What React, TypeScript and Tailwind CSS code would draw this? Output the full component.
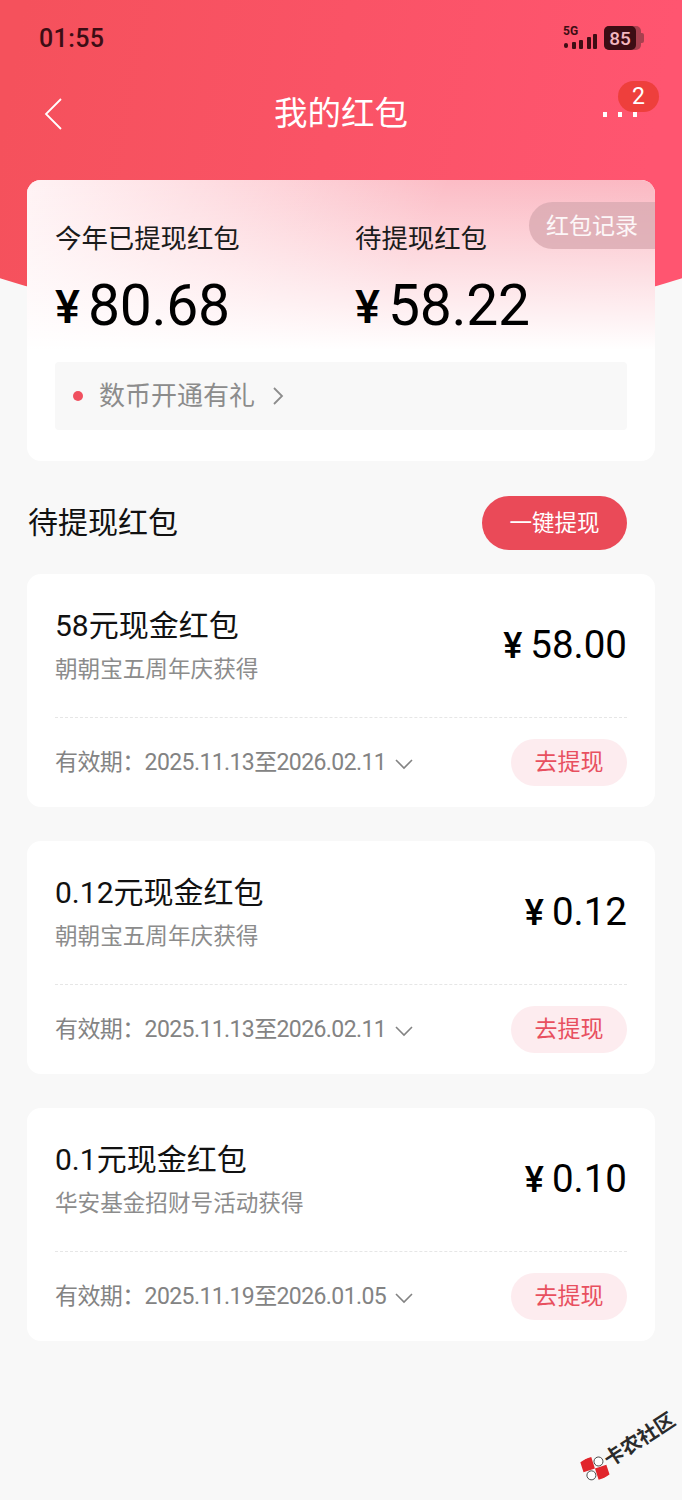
const CJK = 'font-["Roboto","Noto_Sans_CJK_SC",sans-serif]';

type Packet = {
  title: string;
  source: string;
  amount: string;
  validity: string;
};

const packets: Packet[] = [
  { title: '58元现金红包', source: '朝朝宝五周年庆获得', amount: '58.00', validity: '2025.11.13至2026.02.11' },
  { title: '0.12元现金红包', source: '朝朝宝五周年庆获得', amount: '0.12', validity: '2025.11.13至2026.02.11' },
  { title: '0.1元现金红包', source: '华安基金招财号活动获得', amount: '0.10', validity: '2025.11.19至2026.01.05' },
];

function StatusBar() {
  return (
    <div className="flex h-[76px] items-center justify-between pl-[39px] pr-[41px]">
      <span className="text-[25px] font-medium leading-none tracking-[0.4px] text-[#3d0d14]">01:55</span>
      <div className="flex items-center gap-[6px]">
        <svg width="36" height="26" viewBox="0 0 36 26" fill="#3d0d14">
          <text x="1" y="10" fontSize="12" fontWeight="700" fontFamily="Roboto">5G</text>
          <rect x="2" y="18" width="4" height="5" rx="2" />
          <rect x="10" y="17" width="4" height="7" rx="1" />
          <rect x="17" y="15" width="4" height="9" rx="1" />
          <rect x="25" y="12" width="4" height="12" rx="1" />
          <rect x="31" y="9" width="4" height="15" rx="1" />
        </svg>
        <div className="relative flex h-[24px] w-[37px] items-center rounded-[5px] bg-[#a8404f]">
          <div className="flex h-full w-[32px] items-center justify-center rounded-[5px] bg-[#3d0d14] text-[19px] font-medium leading-none text-[#f3b7bf]">
            85
          </div>
          <div className="absolute -right-[3px] h-[10px] w-[3px] rounded-r-[2px] bg-[#a8404f]" />
        </div>
      </div>
    </div>
  );
}

function NavBar() {
  return (
    <div className="relative flex h-[76px] items-center justify-center">
      <svg className="absolute left-[42px] top-[21px]" width="22" height="34" viewBox="0 0 22 34" fill="none" stroke="#fff" strokeWidth="1.8">
        <path d="M19 2 L4 17 L19 32" />
      </svg>
      <span className="text-[33.5px] leading-none text-white">我的红包</span>
      <div className="absolute left-[603px] top-[36px] flex gap-[11px]">
        <span className="h-[5px] w-[4px] bg-white" />
        <span className="h-[5px] w-[4px] bg-white" />
        <span className="h-[5px] w-[4px] bg-white" />
      </div>
      <div className="absolute left-[618px] top-[5px] flex h-[31px] w-[41px] items-center justify-center rounded-full bg-[#ee3f3c] text-[23px] leading-none text-white">
        2
      </div>
    </div>
  );
}

function Balance({ label, value }: { label: string; value: string }) {
  return (
    <div className="flex flex-col">
      <span className="text-[26.4px] leading-[36px] text-[#1b1b1b]">{label}</span>
      <div className="mt-[17px] flex items-center text-black">
        <span className="mr-[8px] text-[47px] font-medium leading-none">¥</span>
        <span className="text-[57px] leading-[64px] tracking-[-0.3px]">{value}</span>
      </div>
    </div>
  );
}

function SummaryCard() {
  return (
    <div className="relative mx-[27px] mt-[28px] h-[281px] overflow-hidden rounded-[14px] bg-white">
      <div className="h-[170px] bg-[linear-gradient(to_bottom,rgba(255,255,255,0)_0%,#ffffff_100%),linear-gradient(115deg,rgba(255,255,255,0.8)_0%,rgba(255,255,255,0)_60%),linear-gradient(90deg,#fec4cc_0%,#fbb8c2_100%)] px-[28px] pt-[41px]">
        <div className="grid grid-cols-[300px_1fr]">
          <Balance label="今年已提现红包" value="80.68" />
          <Balance label="待提现红包" value="58.22" />
        </div>
      </div>
      <div className="absolute right-0 top-[22px] flex h-[47px] w-[126px] items-center justify-center rounded-l-full bg-[#d9aab2]/80 pt-[1px] text-[23px] leading-none text-white/90">
        红包记录
      </div>
      <div className="mx-[28px] mt-[12px] flex h-[68px] items-center rounded-[4px] bg-[#f8f8f8] pl-[18px]">
        <span className="h-[10px] w-[10px] rounded-full bg-[#f0505f]" />
        <span className="ml-[16px] text-[26px] leading-none text-[#8c8c8c]">数币开通有礼</span>
        <svg className="ml-[17px]" width="12" height="20" viewBox="0 0 12 20" fill="none" stroke="#8c8c8c" strokeWidth="1.8">
          <path d="M2 2 L10 10 L2 18" />
        </svg>
      </div>
    </div>
  );
}

function PacketCard({ packet }: { packet: Packet }) {
  return (
    <div className="h-[233px] rounded-[14px] bg-white px-[28px]">
      <div className="flex h-[144px] items-center justify-between border-b border-dashed border-[#e6e6e6]">
        <div className="flex flex-col">
          <span className="text-[30px] leading-[40px] text-[#111]">{packet.title}</span>
          <span className="mt-[8px] text-[22.6px] leading-[32px] text-[#8c8c8c]">{packet.source}</span>
        </div>
        <div className="flex items-center text-black">
          <span className="mr-[8px] text-[36px] font-medium leading-none">¥</span>
          <span className="text-[38.5px] leading-none">{packet.amount}</span>
        </div>
      </div>
      <div className="flex h-[89px] items-center justify-between">
        <div className="flex items-center">
          <span className="text-[23px] leading-none tracking-[-0.6px] text-[#838383]">有效期：{packet.validity}</span>
          <svg className="ml-[9px] mt-[4px]" width="18" height="11" viewBox="0 0 18 11" fill="none" stroke="#838383" strokeWidth="1.6">
            <path d="M1 1 L9 9 L17 1" />
          </svg>
        </div>
        <div className="flex h-[47px] w-[116px] items-center justify-center rounded-full bg-[#fdecef] text-[23px] leading-none text-[#e8505f]">
          去提现
        </div>
      </div>
    </div>
  );
}

function Watermark() {
  return (
    <div className="absolute left-[575px] top-[1430px] flex h-[30px] w-[112px] -rotate-[33deg] items-center">
      <svg className="shrink-0" width="26" height="26" viewBox="0 0 26 26">
        <g transform="rotate(15 13 13)">
          <rect x="1" y="1" width="12" height="12" fill="#e1252b" />
          <rect x="13" y="13" width="12" height="12" fill="#e1252b" />
          <rect x="14" y="3" width="9" height="9" rx="4.5" fill="#fff" stroke="#333" strokeWidth="0.8" />
          <rect x="3" y="14" width="9" height="9" rx="4.5" fill="#fff" stroke="#333" strokeWidth="0.8" />
        </g>
      </svg>
      <span className="whitespace-nowrap text-[20px] font-bold leading-none text-[#2b2b2b]">卡农社区</span>
    </div>
  );
}

export default function App() {
  return (
    <div className={`relative h-[1500px] w-[682px] overflow-hidden bg-[#f8f8f8] ${CJK}`}>
      <div className="absolute -left-[159px] -top-[200px] h-[524px] w-[1000px] rounded-b-[500px_170px] bg-[linear-gradient(100deg,#f5515c_20%,#ff5570_80%)]" />
      <div className="relative">
        <StatusBar />
        <NavBar />
        <SummaryCard />
        <div className="flex h-[113px] items-center justify-between pl-[28px] pr-[55px] pt-[11px]">
          <span className="text-[30px] leading-none text-[#111]">待提现红包</span>
          <div className="flex h-[54px] w-[145px] items-center justify-center rounded-full bg-[#ea4a58] text-[22.5px] leading-none text-white">
            一键提现
          </div>
        </div>
        <div className="flex flex-col gap-[34px] px-[27px]">
          {packets.map((packet) => (
            <PacketCard key={packet.title} packet={packet} />
          ))}
        </div>
      </div>
      <Watermark />
    </div>
  );
}
